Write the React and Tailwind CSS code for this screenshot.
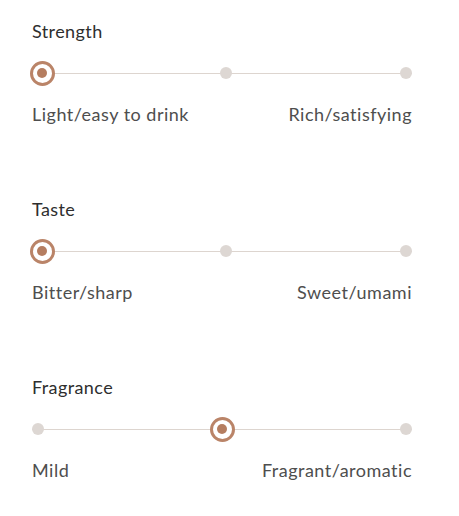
const sliders = [
  { title: "Strength", left: "Light/easy to drink", right: "Rich/satisfying", value: 0 },
  { title: "Taste", left: "Bitter/sharp", right: "Sweet/umami", value: 0 },
  { title: "Fragrance", left: "Mild", right: "Fragrant/aromatic", value: 1 },
];

function Stop({ active }) {
  if (active) {
    return (
      <div className="relative flex h-[20px] w-[20px] items-center justify-center">
        <div className="absolute -inset-[2.5px] rounded-full border-[3.5px] border-[#ba8468] bg-white" />
        <div className="relative h-[10px] w-[10px] rounded-full bg-[#b57d60]" />
      </div>
    );
  }
  return <div className="relative h-[12px] w-[12px] rounded-full bg-[#ddd7d3]" />;
}

function Scale({ title, left, right, value }) {
  return (
    <div>
      <h3 className="text-[18px] font-normal leading-[22px] tracking-[0.4px] text-[#2e2e2e]">{title}</h3>
      <div className="relative mt-[19px] flex h-[24px] items-center justify-between">
        <div className="absolute left-0 right-0 top-1/2 h-px bg-[#ddd5cf]" />
        {[0, 1, 2].map((i) => (
          <Stop key={i} active={i === value} />
        ))}
      </div>
      <div className="mt-[18px] flex justify-between text-[18px] leading-[22px] tracking-[0.5px] text-[#4e4e4e]">
        <span>{left}</span>
        <span>{right}</span>
      </div>
    </div>
  );
}

export default function App() {
  return (
    <div
      className="min-h-[516px] bg-white pl-[32px] pr-[47px] pt-[20px]"
      style={{ fontFamily: "Lato, 'Open Sans', sans-serif" }}
    >
      <div className="flex flex-col gap-[73px]">
        {sliders.map((s) => (
          <Scale key={s.title} {...s} />
        ))}
      </div>
    </div>
  );
}
